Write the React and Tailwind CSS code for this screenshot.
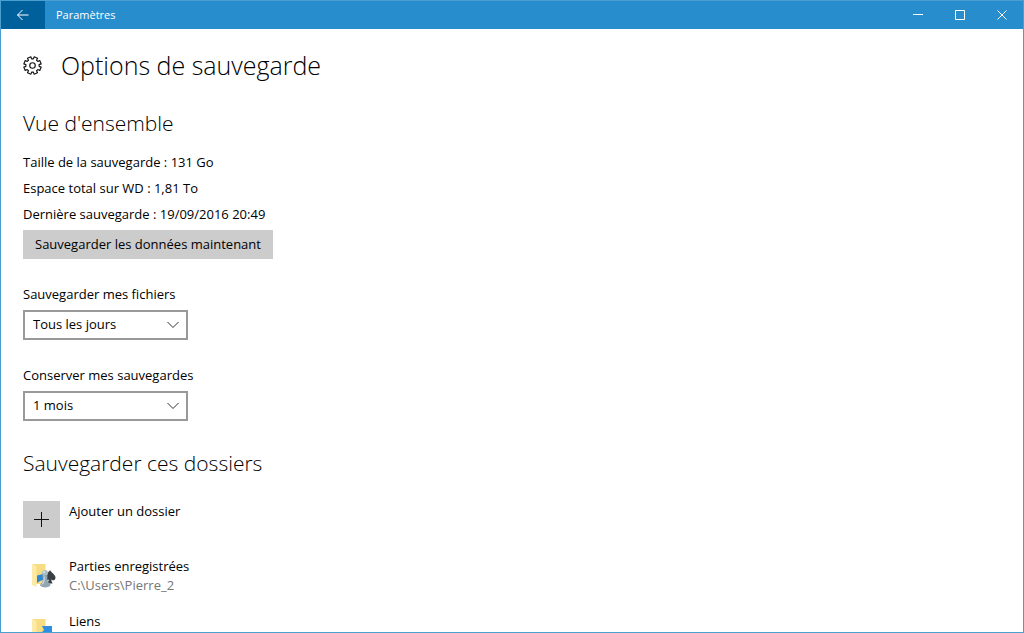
import React from "react";
import { useState } from "react";

const overview = [
  { label: "Taille de la sauvegarde", value: "131 Go" },
  { label: "Espace total sur WD", value: "1,81 To" },
  { label: "Dernière sauvegarde", value: "19/09/2016 20:49" },
];

const frequencies = ["Toutes les heures", "Tous les jours", "Manuellement"];
const durations = ["1 mois", "3 mois", "6 mois", "1 an", "Indéfiniment"];

// Eight teeth, with a notch at the top
const gearPath = () => {
  const points = [];
  for (let i = 0; i < 8; i++) {
    const middle = i * 45 + 22.5;
    [
      [-15, 7],
      [-12, 9.3],
      [12, 9.3],
      [15, 7],
    ].forEach(([offset, radius]) => {
      const angle = ((middle + offset) * Math.PI) / 180;
      const x = 10 + radius * Math.sin(angle);
      const y = 10 - radius * Math.cos(angle);
      points.push(`${x.toFixed(2)} ${y.toFixed(2)}`);
    });
  }
  return `M${points.join("L")}Z`;
};

function GearIcon() {
  return (
    <svg
      viewBox="0 0 20 20"
      className="h-[19px] w-[19px] shrink-0"
      fill="none"
      stroke="#111111"
      strokeWidth="1.2"
      strokeLinejoin="round"
    >
      <path d={gearPath()} />
      <circle cx="10" cy="10" r="2.9" />
    </svg>
  );
}

function GamesFolderIcon() {
  return (
    <svg viewBox="0 0 24 26" className="h-[26px] w-6">
      <path d="M1 2h12.500v20H4z" fill="#f8dc82" />
      <path d="M0 2l4.500 2v21L0 23z" fill="#fdeaa8" />
      <path d="M5 13.500l6-1.500v6l-3 1-3 2z" fill="#2f86d1" />
      <path
        d="M18 8c1 2.500 5.500 4.500 5.500 7.500 0 3-3 3.500-4.500 2l1.500 4h-5l1.500-4c-2 1.500-5 1-5-2 0-3 5-5 6-7.500z"
        fill="#3a4045"
      />
      <circle cx="13" cy="11" r="3" fill="#a9bac3" />
      <path
        d="M10.500 13.500h5c-.5 3 0 5.500 1 7 1.500.8 2 2 2 3-2.500 2.500-8 2.500-10.500 0 0-1 .5-2 2-3 1-1.500 1-4 .5-7z"
        fill="#93a6b0"
      />
      <path d="M11.500 14.500h1c.5 3 0 6-1 7l-2 1.500c0-1 .5-1.500 1-2 1-1.500 1.500-4 1-6.500z" fill="#d7e0e4" />
      <circle cx="12" cy="10" r="1.200" fill="#d2dde2" />
    </svg>
  );
}

function LinksFolderIcon() {
  return (
    <svg viewBox="0 0 24 26" className="h-[26px] w-6">
      <path d="M1 2h12.500v20H4z" fill="#f8dc82" />
      <path d="M0 2l4.500 2v21L0 23z" fill="#fdeaa8" />
      <path d="M10 9h10v10l-3-3-5 5-4-4 4-4z" fill="#2f8ee0" />
    </svg>
  );
}

const folders = [
  { title: "Parties enregistrées", path: "C:\\Users\\Pierre_2", icon: GamesFolderIcon },
  { title: "Liens", icon: LinksFolderIcon },
];

function TitleBar() {
  return (
    <header className="flex h-7 shrink-0 items-stretch bg-[#278dcc] text-white">
      <button aria-label="Retour" className="flex w-11 items-center justify-center bg-[#00609c]">
        <svg viewBox="0 0 12 12" className="h-3 w-3" fill="none" stroke="currentColor">
          <path d="M0.5 6H11.5M5.5 1L0.5 6l5 5" />
        </svg>
      </button>
      <span className="flex flex-1 items-center pl-[11px] text-[11px]">Paramètres</span>
      <button aria-label="Réduire" className="flex w-[42px] items-center justify-center">
        <svg viewBox="0 0 10 10" className="h-2.5 w-2.5" stroke="currentColor">
          <path d="M0 4.5h10" />
        </svg>
      </button>
      <button aria-label="Agrandir" className="flex w-[42px] items-center justify-center">
        <svg viewBox="0 0 10 10" className="h-2.5 w-2.5" fill="none" stroke="currentColor">
          <path d="M0.5 0.5h9v9h-9z" />
        </svg>
      </button>
      <button aria-label="Fermer" className="flex w-[42px] items-center justify-center">
        <svg viewBox="0 0 10 10" className="h-2.5 w-2.5" fill="none" stroke="currentColor">
          <path d="M0.5 0.5l9 9M9.5 0.5l-9 9" />
        </svg>
      </button>
    </header>
  );
}

function SelectField({ id, label, options, value, onChange }) {
  return (
    <div className="mt-[25px]">
      <label htmlFor={id} className="block leading-5">
        {label}
      </label>
      <div className="relative mt-1.5 w-[165px]">
        <select
          id={id}
          value={value}
          onChange={(e) => onChange(e.target.value)}
          className="h-[30px] w-full appearance-none border-2 border-[#999999] bg-white pl-2 pr-7"
        >
          {options.map((option) => (
            <option key={option}>{option}</option>
          ))}
        </select>
        <svg
          viewBox="0 0 12 8"
          className="pointer-events-none absolute right-[9px] top-[11px] h-2 w-3"
          fill="none"
          stroke="#333333"
        >
          <path d="M0.5 1L6 6.5 11.5 1" />
        </svg>
      </div>
    </div>
  );
}

export default function App() {
  const [frequency, setFrequency] = useState("Tous les jours");
  const [duration, setDuration] = useState("1 mois");

  return (
    <div className="flex h-screen flex-col overflow-hidden border border-[#4a9fd0] bg-white font-['Open_Sans','Noto_Sans',sans-serif] text-[13px] text-black">
      <TitleBar />
      <main className="min-h-0 flex-1 overflow-hidden px-[22px] pt-[18px]">
        <div className="flex items-center gap-[19px]">
          <GearIcon />
          <h1 className="text-[25px] font-[350] leading-9">Options de sauvegarde</h1>
        </div>

        <section className="mt-6">
          <h2 className="text-[21px] font-[350] leading-8">Vue d'ensemble</h2>
          <div className="mt-2.5">
            {overview.map((item) => (
              <p key={item.label} className="leading-[26px]">
                {item.label} : {item.value}
              </p>
            ))}
          </div>
          <button className="mt-[3px] h-[29px] bg-[#cccccc] px-3">
            Sauvegarder les données maintenant
          </button>
          <SelectField
            id="frequency"
            label="Sauvegarder mes fichiers"
            options={frequencies}
            value={frequency}
            onChange={setFrequency}
          />
          <SelectField
            id="duration"
            label="Conserver mes sauvegardes"
            options={durations}
            value={duration}
            onChange={setDuration}
          />
        </section>

        <section className="mt-[26px]">
          <h2 className="text-[21px] font-[350] leading-8">Sauvegarder ces dossiers</h2>
          <button className="mt-[22px] flex items-start gap-[9px] text-left">
            <span className="flex h-[37px] w-[37px] items-center justify-center bg-[#cccccc]">
              <svg viewBox="0 0 15 15" className="h-[15px] w-[15px]" stroke="#111111">
                <path d="M7.5 0v15M0 7.5h15" />
              </svg>
            </span>
            <span className="leading-5">Ajouter un dossier</span>
          </button>
          <ul className="mt-[18px]">
            {folders.map((folder) => (
              <li key={folder.title} className="flex h-[55px] items-start gap-[9px]">
                <div className="flex w-[37px] justify-end pr-1 pt-[6px]">
                  {React.createElement(folder.icon)}
                </div>
                <div>
                  <h3 className="leading-5">{folder.title}</h3>
                  {folder.path && (
                    <p className="leading-[18px] text-[#767676]">{folder.path}</p>
                  )}
                </div>
              </li>
            ))}
          </ul>
        </section>
      </main>
    </div>
  );
}
